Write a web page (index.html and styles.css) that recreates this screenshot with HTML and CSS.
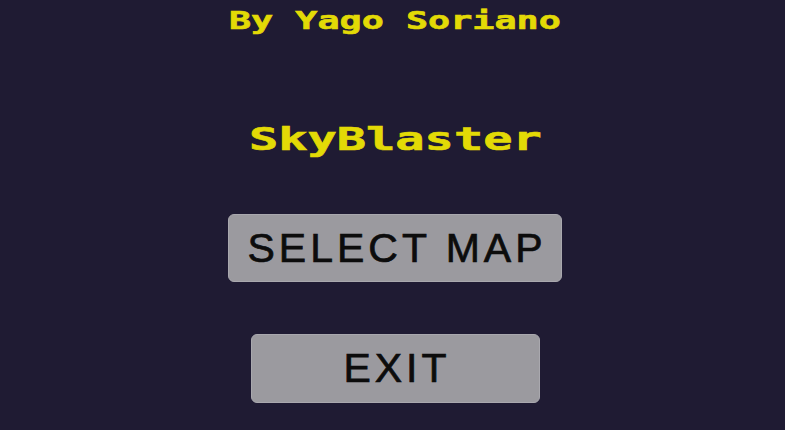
FILE: index.html
```html
<!DOCTYPE html>
<html lang="en">
<head>
  <meta charset="UTF-8">
  <title>SkyBlaster</title>
  <link rel="stylesheet" href="styles.css">
</head>
<body>

  <!-- Menu principal -->
  <div id="menu" class="menu">
    <p class="credit"><span>By Yago Soriano</span></p>
    <h1 class="title"><span>SkyBlaster</span></h1>

    <button class="menu-btn select-btn">SELECT MAP</button>
    <button class="menu-btn exit-btn">EXIT</button>
  </div>

</body>
</html>
```

FILE: styles.css
```css
body {
  margin: 0;
  padding: 0;
  background-color: #1f1b33;
  min-height: 100vh;
  overflow: hidden;
}

.menu {
  display: flex;
  flex-direction: column;
  align-items: center;
  padding-left: 5px;
}

/* pixel style texts */
.credit, .title {
  font-family: "DejaVu Sans Mono", monospace;
  font-weight: bold;
  color: #e3da06;
  margin: 0;
  text-align: center;
  -webkit-text-stroke: 0.6px #e3da06;
}

.credit span, .title span {
  display: inline-block;
  transform: scaleX(1.47);
}

.credit {
  font-size: 25px;
  line-height: 30px;
  margin-top: 6px;
}

.title {
  font-size: 32px;
  line-height: 40px;
  margin-top: 83px;
}

.title span {
  transform: scaleX(1.52);
}

.menu-btn {
  display: flex;
  align-items: center;
  justify-content: center;
  padding: 0 0 0 4px;
  border: 1px solid #a9a8ae;
  border-radius: 6px;
  background-color: #9b9a9f;
  color: #0c0c0c;
  font-family: "Liberation Sans", Arial, sans-serif;
  font-size: 41px;
  letter-spacing: 4px;
  -webkit-text-stroke: 0.7px #0c0c0c;
  cursor: pointer;
}

.select-btn {
  width: 334px;
  height: 68px;
  margin-top: 55px;
}

.exit-btn {
  width: 289px;
  height: 69px;
  margin-top: 52px;
}
```
